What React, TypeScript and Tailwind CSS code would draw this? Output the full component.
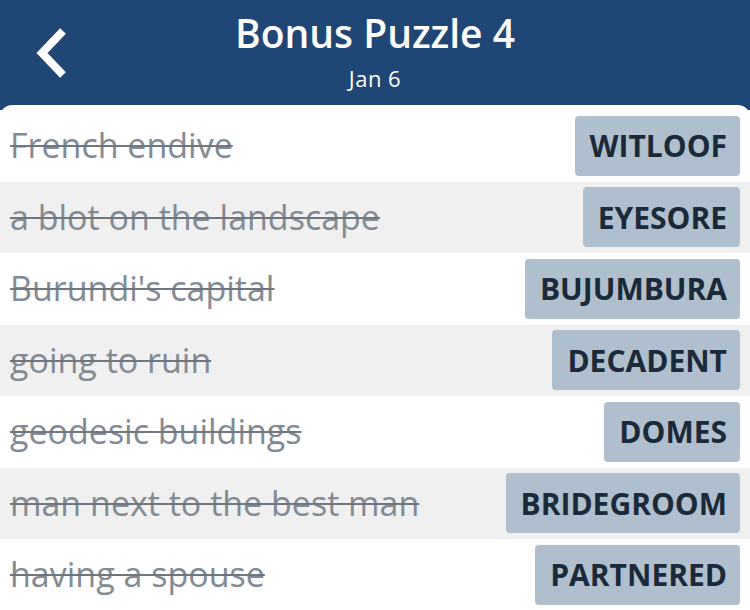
const clues = [
  { clue: "French endive", answer: "WITLOOF" },
  { clue: "a blot on the landscape", answer: "EYESORE" },
  { clue: "Burundi's capital", answer: "BUJUMBURA" },
  { clue: "going to ruin", answer: "DECADENT" },
  { clue: "geodesic buildings", answer: "DOMES" },
  { clue: "man next to the best man", answer: "BRIDEGROOM" },
  { clue: "having a spouse", answer: "PARTNERED" },
];

const BackIcon = () => (
  <svg width="34" height="52" viewBox="0 0 34 52" fill="none">
    <path d="M28 4 L7 26 L28 48" stroke="white" strokeWidth="8" strokeLinecap="butt" strokeLinejoin="miter" />
  </svg>
);

export default function App() {
  return (
    <div className="w-[750px] h-[610px] overflow-hidden bg-[#1f4674] flex flex-col" style={{ fontFamily: "'Open Sans', Lato, sans-serif" }}>
      <header className="relative h-[105px] shrink-0 flex flex-col items-center text-white">
        <div className="absolute left-[35px] top-[27px]">
          <BackIcon />
        </div>
        <h1 className="mt-[9px] text-[39px] leading-[48px] font-semibold">Bonus Puzzle 4</h1>
        <p className="mt-[7px] text-[22px] leading-[28px] tracking-[0.5px]">Jan 6</p>
      </header>

      <main className="flex-1 bg-white rounded-t-[12px] pt-[5px]">
        {clues.map((c, i) => (
          <div
            key={c.answer}
            className={`h-[71.5px] flex items-center justify-between pl-[10px] pr-[10px] ${i % 2 === 1 ? "bg-[#f0f0f0]" : "bg-white"}`}
          >
            <span className="text-[34px] text-[#828a93] line-through decoration-[2px] decoration-[#6f767e]">{c.clue}</span>
            <span className="h-[60px] flex items-center pl-[15px] pr-[13px] rounded-[4px] bg-[#afbfcd] text-[#1a2a3a] text-[30px] font-bold">
              {c.answer}
            </span>
          </div>
        ))}
      </main>
    </div>
  );
}
